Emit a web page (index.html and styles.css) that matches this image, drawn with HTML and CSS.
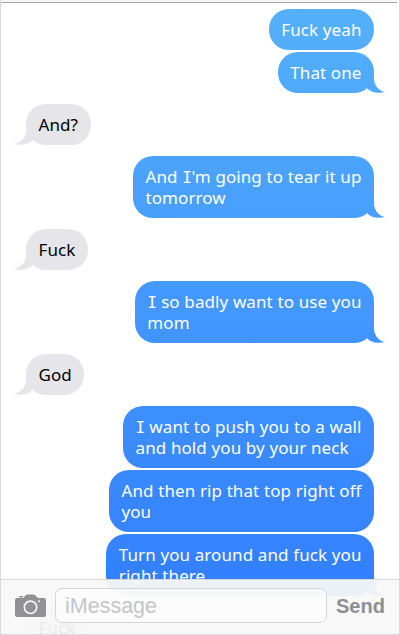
FILE: index.html
```html
<!DOCTYPE html>
<html lang="en">
<head>
  <meta charset="UTF-8" />
  <meta name="viewport" content="width=device-width, initial-scale=1.0"/>
  <title>Messages</title>
  <link rel="stylesheet" href="styles.css">
</head>
<body>

<div class="phone">
  <div class="chat">
    <div class="group me">
      <p class="bubble">Fuck yeah</p>
      <p class="bubble tail">That one<svg viewBox="0 0 18 18"><path d="M7 -3V4C8 10 12 15 18 16C12 17.6 4 17 0 12Z"/></svg></p>
    </div>
    <div class="group them">
      <p class="bubble tail">And?<svg viewBox="0 0 18 18"><path d="M13 -3V4C12 10 7 15 0 16C8 17.6 15 17 20 12Z"/></svg></p>
    </div>
    <div class="group me two">
      <p class="bubble tail">And <span class="i">I</span>'m going to tear it up<br>tomorrow<svg viewBox="0 0 18 18"><path d="M7 -3V4C8 10 12 15 18 16C12 17.6 4 17 0 12Z"/></svg></p>
    </div>
    <div class="group them">
      <p class="bubble tail">Fuck<svg viewBox="0 0 18 18"><path d="M13 -3V4C12 10 7 15 0 16C8 17.6 15 17 20 12Z"/></svg></p>
    </div>
    <div class="group me three">
      <p class="bubble tail"><span class="i">I</span> so badly want to use you<br>mom<svg viewBox="0 0 18 18"><path d="M7 -3V4C8 10 12 15 18 16C12 17.6 4 17 0 12Z"/></svg></p>
    </div>
    <div class="group them">
      <p class="bubble tail">God<svg viewBox="0 0 18 18"><path d="M13 -3V4C12 10 7 15 0 16C8 17.6 15 17 20 12Z"/></svg></p>
    </div>
    <div class="group me four">
      <p class="bubble"><span class="i">I</span> want to push you to a wall<br>and hold you by your neck</p>
      <p class="bubble">And then rip that top right off<br>you</p>
      <p class="bubble tail">Turn you around and fuck you<br>right there<svg viewBox="0 0 18 18"><path d="M7 -3V4C8 10 12 15 18 16C12 17.6 4 17 0 12Z"/></svg></p>
    </div>
    <div class="group them">
      <p class="bubble">Fuck</p>
    </div>
  </div>

  <div class="compose">
    <svg class="camera" viewBox="0 0 31 24">
      <rect x="4" y="2" width="4" height="1.5" rx=".7"/>
      <path d="M2 4H8L11 1Q11.5 .5 12.5 .5H18.5Q19.5 .5 20 1L23 4H29Q31 4 31 6V21Q31 23 29 23H2Q0 23 0 21V6Q0 4 2 4Z"/>
      <circle class="lens" cx="15.5" cy="13.3" r="6.2"/>
      <circle class="dot" cx="24" cy="7.3" r="1"/>
    </svg>
    <div class="field">iMessage</div>
    <div class="send">Send</div>
  </div>
</div>

</body>
</html>
```
FILE: styles.css
```css
* {
  margin: 0;
  padding: 0;
  box-sizing: border-box;
}

body {
  background: #fff;
}

.phone {
  position: relative;
  width: 400px;
  height: 635px;
  overflow: hidden;
  border-left: 1px solid #d9d9dc;
  border-right: 1px solid #d9d9dc;
  font-family: "Noto Sans", sans-serif;
}

/* thin line left from the header */
.phone::before {
  content: "";
  display: block;
  width: 396px;
  height: 2px;
  background: #f6f6f6;
  border-bottom: 1px solid #a5a5a8;
}

.chat {
  display: flex;
  flex-direction: column;
  gap: 11px;
  padding: 6px 25px 0;
}

.group {
  display: flex;
  flex-direction: column;
  align-items: flex-start;
  gap: 2px;
}

.group.me {
  align-items: flex-end;
}

.bubble {
  position: relative;
  padding: 10px 12.5px;
  border-radius: 20px;
  font-size: 17px;
  line-height: 21px;
  letter-spacing: 0.08px;
  word-spacing: 0.15px;
  white-space: nowrap;
}

/* capital I with serifs */
.i {
  font-family: "DejaVu Sans Mono", monospace;
  font-size: 16px;
  line-height: 1;
  letter-spacing: -0.5px;
}

.me .bubble {
  background: linear-gradient(#55b1fb, #3380ff 580px) fixed;
  color: #fff;
}

.them .bubble {
  background: #e5e5ea;
  color: #000;
}

.tail svg {
  position: absolute;
  bottom: -1px;
  width: 18px;
  height: 18px;
  overflow: visible;
}

.me .tail svg {
  right: -11px;
  fill: #50a9fc;
}

.me.two .tail svg {
  fill: #499ffc;
}

.me.three .tail svg {
  fill: #4294fd;
}

.me.four .tail svg {
  fill: #3380ff;
}

.them .tail svg {
  left: -13px;
  fill: #e5e5ea;
}

/* message bar */
.compose {
  position: absolute;
  left: 0;
  right: 0;
  bottom: 0;
  height: 56px;
  display: flex;
  align-items: center;
  padding: 0 14px 3px;
  background: rgba(248, 248, 248, 0.94);
  border-top: 1px solid #d9d9dc;
  border-bottom: 1px solid #dcdcdf;
  font-family: "Liberation Sans", sans-serif;
}

.camera {
  width: 31px;
  height: 24px;
  fill: #919196;
}

.camera .lens {
  fill: none;
  stroke: #f7f7f7;
  stroke-width: 1.6;
}

.camera .dot {
  fill: #f7f7f7;
}

.field {
  width: 272px;
  height: 35px;
  margin-left: 9px;
  padding-left: 9px;
  border: 1px solid #d5d5d9;
  border-radius: 7px;
  background: rgba(255, 255, 255, 0.5);
  color: #c5c5ca;
  font-size: 21.5px;
  line-height: 35px;
}

.send {
  margin: 2px 0 0 9px;
  color: #8e8e93;
  font-size: 20px;
  font-weight: bold;
}
```
